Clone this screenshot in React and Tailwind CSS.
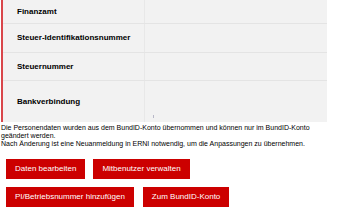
export default function App() {
  const rows = [
    { label: 'Finanzamt', h: 'h-[24px]' },
    { label: 'Steuer-Identifikationsnummer', h: 'h-[29px]' },
    { label: 'Steuernummer', h: 'h-[28px]' },
    { label: 'Bankverbindung', h: 'h-[41px]', last: true },
  ];

  return (
    <div className="w-[339px] h-[216px] bg-white overflow-hidden font-['Liberation_Sans',Arial,sans-serif] text-black">
      {/* Data table */}
      <div className="ml-px w-[326px] border-l-2 border-[#d9464b] bg-[#f2f2f2]">
        {rows.map((row, i) => (
          <div
            key={row.label}
            className={`flex ${row.h} ${i < rows.length - 1 ? 'border-b border-[#e4e4e4]' : ''}`}
          >
            <div className="w-[142px] flex items-center pl-[14px] border-r border-[#e8e8e8] text-[8px] font-bold leading-none">
              {row.label}
            </div>
            <div className="flex-1 relative">
              {row.last && (
                <span className="absolute left-[8px] bottom-[4px] w-px h-[3px] bg-[#b8b8c8]"></span>
              )}
            </div>
          </div>
        ))}
      </div>

      {/* Info text */}
      <p className="mt-[2px] pl-px text-[7px] leading-[8px]">
        Die Personendaten wurden aus dem BundID-Konto übernommen und können nur im BundID-Konto geändert werden.
        <br />
        Nach Änderung ist eine Neuanmeldung in ERNI notwendig, um die Anpassungen zu übernehmen.
      </p>

      {/* Actions */}
      <div className="mt-[11px] pl-[6px] flex flex-col gap-2">
        <div className="flex gap-2">
          <button className="h-[20px] px-[9px] bg-[#cc0000] text-white text-[8px] leading-none">
            Daten bearbeiten
          </button>
          <button className="h-[20px] px-[9px] bg-[#cc0000] text-white text-[8px] leading-none">
            Mitbenutzer verwalten
          </button>
        </div>
        <div className="flex gap-[9px]">
          <button className="h-[20px] px-[9px] bg-[#cc0000] text-white text-[8px] leading-none">
            PI/Betriebsnummer hinzufügen
          </button>
          <button className="h-[20px] px-[9px] bg-[#cc0000] text-white text-[8px] leading-none">
            Zum BundID-Konto
          </button>
        </div>
      </div>
    </div>
  );
}
